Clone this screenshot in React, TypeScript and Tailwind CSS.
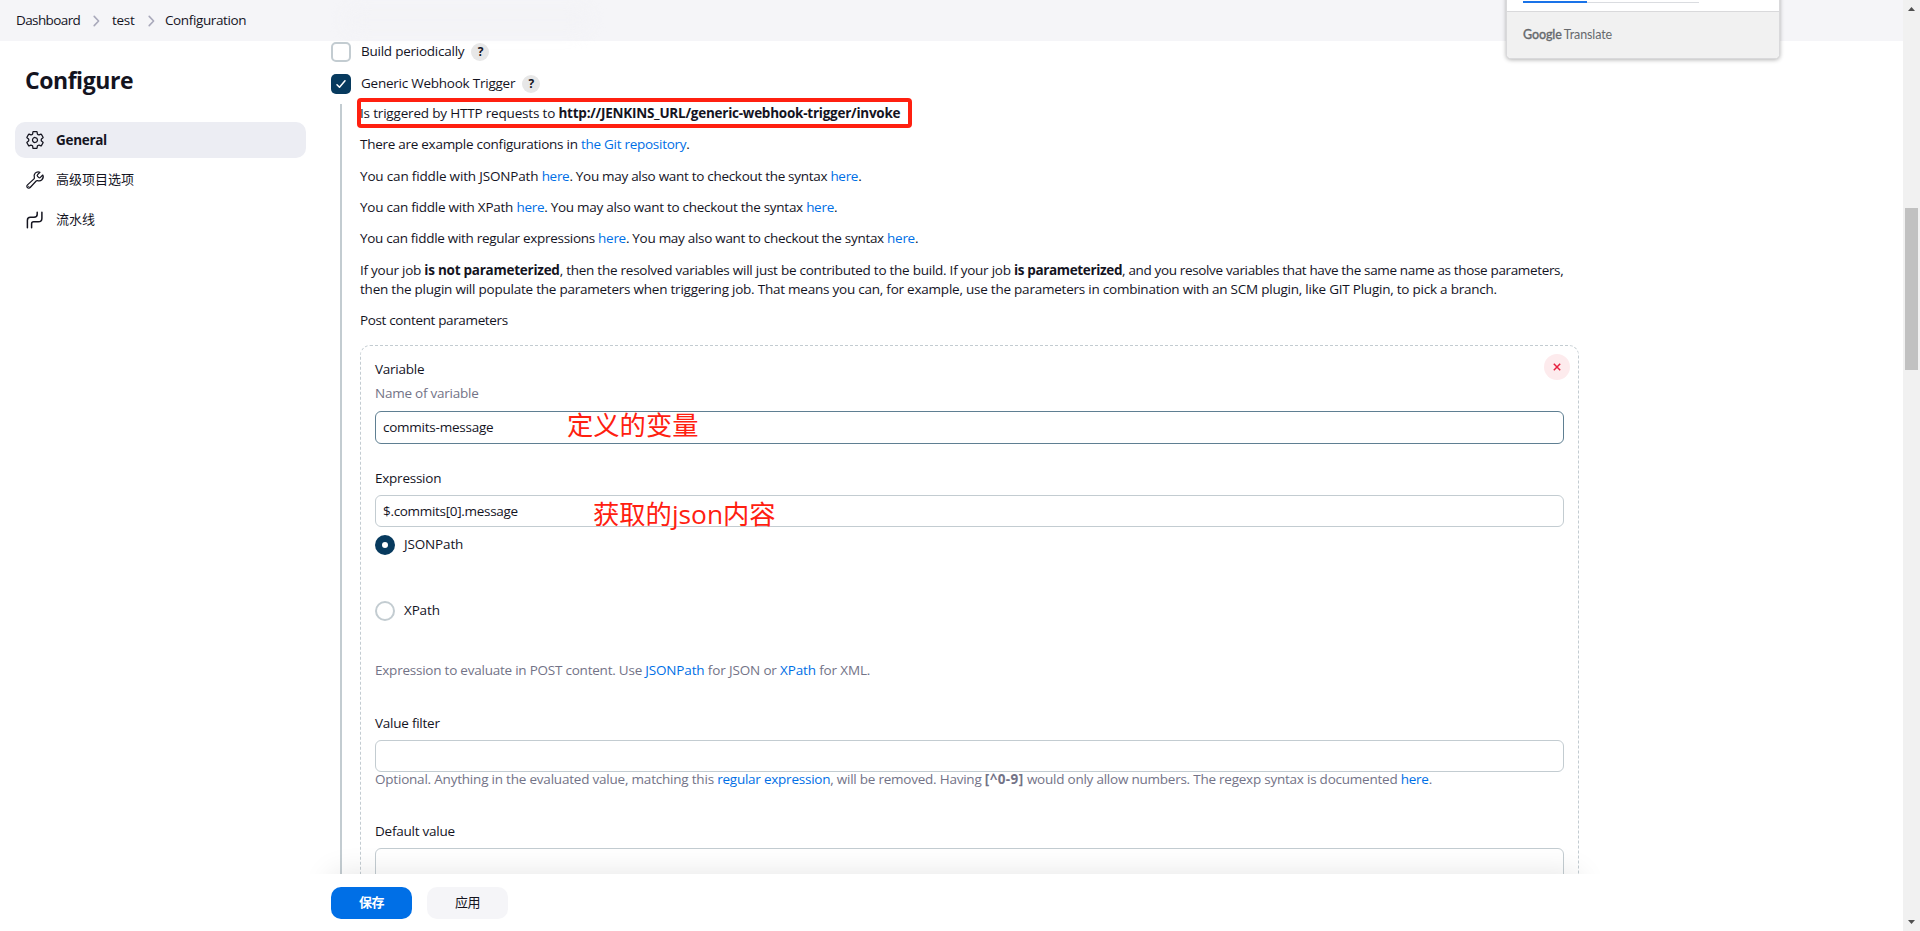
import type { ReactNode } from "react";
import { IoBuildOutline, IoSettingsOutline } from "react-icons/io5";

function Link({ children }: { children: ReactNode }) {
  return <a className="text-[#006fe6]">{children}</a>;
}

function Chevron() {
  return (
    <svg className="h-3 w-[7px]" viewBox="0 0 7 12" fill="none" stroke="#a9a9bb" strokeWidth="1.6">
      <path d="M1.2 1.4 5.6 6 1.2 10.6" strokeLinecap="round" strokeLinejoin="round" />
    </svg>
  );
}

function Help() {
  return (
    <span className="flex size-[18px] items-center justify-center rounded-full bg-[#e7e7e7] text-[12px] leading-none font-bold">
      ?
    </span>
  );
}

function PipelineIcon() {
  return (
    <svg className="size-[18px]" viewBox="0 0 18 18" fill="none" stroke="currentColor" strokeWidth="1.5" strokeLinecap="round">
      <path d="M1.4 16.8V9.2c0-2 1-3 3-3H8c2 0 3.200-1 3.200-3V1.300" />
      <path d="M5.600 16.800v-4c0-1.300.7-2 2-2h4.600c2.400 0 3.700-1.200 3.700-3.600V1.300" />
    </svg>
  );
}

function Radio({ label, checked }: { label: string; checked?: boolean }) {
  return (
    <div className="flex h-5 items-center gap-[9px]">
      {checked ? (
        <span className="flex size-5 items-center justify-center rounded-full bg-[#073a5e]">
          <span className="size-[6px] rounded-full bg-white" />
        </span>
      ) : (
        <span className="size-5 rounded-full border-2 border-[#c3ccd1]" />
      )}
      <span className="tracking-[-0.15px]">{label}</span>
    </div>
  );
}

export default function App() {
  return (
    <div className="flex h-[931px] w-[1920px] overflow-hidden bg-white font-['Open_Sans','Noto_Sans_CJK_SC',sans-serif] text-[13.5px] leading-[19.25px] tracking-[-0.24px] text-[#14141f]">
      <div className="relative flex min-w-0 flex-1 flex-col">
        <header className="relative flex h-[41px] shrink-0 items-center bg-[#f5f5f8] pl-4">
          <span className="w-[77px] tracking-[-0.6px]">Dashboard</span>
          <Chevron />
          <span className="ml-[12px] w-[36px] tracking-[-0.3px]">test</span>
          <Chevron />
          <span className="ml-[10px] tracking-[-0.38px]">Configuration</span>
          <span className="absolute top-2 left-[345px] h-6 w-[245px] rounded-full bg-[#f3f3f6] blur-[8px]" />
        </header>

        <div className="flex min-h-0 flex-1">
          <aside className="w-[306px] shrink-0 pl-[15px]">
            <h1 className="mt-[22px] pl-[10px] text-[23px] leading-[34px] font-bold tracking-[-0.45px]">Configure</h1>
            <nav className="mt-[25px] flex flex-col gap-1">
              <a className="flex h-9 items-center gap-[10px] rounded-[10px] bg-[#ecedf3] pl-[10px] font-bold">
                <IoSettingsOutline className="size-5" />
                <span className="pt-[2px] pl-px tracking-[-0.3px]">General</span>
              </a>
              <a className="flex h-9 items-center gap-[11px] pl-[10px] text-[13px] tracking-normal">
                <IoBuildOutline className="size-5" />
                高级项目选项
              </a>
              <a className="flex h-9 items-center gap-[12px] pl-[11px] text-[13px] tracking-normal">
                <PipelineIcon />
                流水线
              </a>
            </nav>
          </aside>

          <main className="flex min-w-0 flex-1 flex-col">
            <section className="h-[833px] shrink-0 overflow-hidden pt-px pl-[25px]">
              <div className="flex h-5 items-center">
                <span className="size-5 rounded-[5px] border-2 border-[#c3ccd1]" />
                <span className="mr-[7px] ml-[10px]">Build periodically</span>
                <Help />
              </div>
              <div className="mt-3 flex h-5 items-center">
                <span className="flex size-5 items-center justify-center rounded-[5px] bg-[#073a5e]">
                  <svg className="size-[10px]" viewBox="0 0 10 10" fill="none" stroke="#fff" strokeWidth="1.5" strokeLinecap="round" strokeLinejoin="round">
                    <path d="M1 5.800 3.500 8.300 9 1.800" />
                  </svg>
                </span>
                <span className="mr-[7px] ml-[10px]">Generic Webhook Trigger</span>
                <Help />
              </div>

              <div className="mt-[10px] ml-[9px] border-l-2 border-[#c3ccd1] pl-[18px]">
                <div className="flex flex-col gap-3 pr-[325px] whitespace-nowrap">
                  <p className="relative tracking-[-0.18px]">
                    Is triggered by HTTP requests to <b className="tracking-[-0.24px]">http://JENKINS_URL/generic-webhook-trigger/invoke</b>
                    <span className="absolute top-[-6px] left-[-3px] h-[30px] w-[555px] rounded-[4px] border-4 border-[#ff2010]" />
                  </p>
                  <p className="tracking-[-0.27px]">
                    There are example configurations in <Link>the Git repository</Link>.
                  </p>
                  <p className="tracking-[-0.3px]">
                    <span className="tracking-[-0.17px]">You can fiddle with JSONPath </span>
                    <Link>here</Link>. You may also want to checkout the syntax <Link>here</Link>.
                  </p>
                  <p className="tracking-[-0.28px]">
                    <span className="tracking-[-0.24px]">You can fiddle with XPath </span>
                    <Link>here</Link>. You may also want to checkout the syntax <Link>here</Link>.
                  </p>
                  <p className="tracking-[-0.295px]">
                    You can fiddle with regular expressions <Link>here</Link>. You may also want to checkout the syntax <Link>here</Link>.
                  </p>
                  <p className="tracking-[-0.23px]">
                    <span className="relative top-px tracking-[-0.25px]">
                      If your job <b>is not parameterized</b>, then the resolved variables will just be contributed to the build. If your job{" "}
                      <span className="tracking-[-0.35px]">
                        <b>is parameterized</b>, and you resolve variables that have the same name as those parameters,
                      </span>
                    </span>
                    <br />
                    then the plugin will populate the parameters when triggering job. That means you can, for example, use the parameters in combination with an SCM plugin, like GIT Plugin, to pick a branch.
                  </p>
                  <p className="tracking-[-0.36px]">Post content parameters</p>
                </div>

                <div className="relative mt-[15px] h-[600px] w-[1219px] rounded-[10px] border border-dashed border-[#c3ccd1] px-[14px] pt-[14px]">
                  <button className="absolute top-2 right-[8px] flex size-[26px] items-center justify-center rounded-full bg-[#fdebed]">
                    <svg className="size-2" viewBox="0 0 8 8" fill="none" stroke="#e6213f" strokeWidth="1.500">
                      <path d="m.8.8 6.400 6.400M7.200.8.8 7.200" />
                    </svg>
                  </button>
                  <p>Variable</p>
                  <p className="mt-[5px] text-[#737387]">Name of variable</p>
                  <div className="relative mt-[7px] flex h-[33px] items-center rounded-[6px] border border-[#5f7f92] px-[7px] pt-[2px]">
                    commits-message
                    <span className="absolute top-[-6px] left-[191px] text-[26.3px] leading-[38px] tracking-normal text-[#ff2010]">定义的变量</span>
                  </div>

                  <p className="mt-[25px]">Expression</p>
                  <div className="relative mt-[7px] flex h-8 items-center rounded-[6px] border border-[#c3ccd1] px-[7px] pt-[2px] tracking-[-0.31px]">
                    $.commits[0].message
                    <span className="absolute top-[-1px] left-[217px] text-[26.3px] leading-[38px] tracking-normal text-[#ff2010]">获取的json内容</span>
                  </div>
                  <div className="mt-2">
                    <Radio label="JSONPath" checked />
                  </div>
                  <div className="mt-[46px]">
                    <Radio label="XPath" />
                  </div>

                  <p className="mt-[40px] tracking-[-0.15px] text-[#737387]">
                    <span className="tracking-[-0.23px]">Expression to evaluate in POST content. Use </span>
                    <Link>JSONPath</Link> for JSON or <Link>XPath</Link> for XML.
                  </p>
                  <p className="mt-[34px]">Value filter</p>
                  <div className="mt-[7px] h-8 rounded-[6px] border border-[#c3ccd1]" />
                  <p className="mt-[-2px] tracking-[-0.235px] text-[#737387]">
                    <span className="tracking-[-0.21px]">Optional. Anything in the evaluated value, matching this </span>
                    <Link>regular expression</Link>, will be removed. Having <b className="tracking-[0.4px]">[^0-9]</b> would only allow numbers. The regexp syntax is documented <Link>here</Link>.
                  </p>
                  <p className="mt-[32px]">Default value</p>
                  <div className="mt-[7px] h-8 rounded-[6px] border border-[#c3ccd1]" />
                </div>
              </div>
            </section>

            <footer className="relative flex-1 pl-[25px]">
              <div className="absolute top-[-41px] right-0 left-[-30px] h-[41px] overflow-hidden">
                <div className="absolute top-[41px] left-[55px] h-[80px] w-[1248px] shadow-[0_0_30px_rgba(0,0,0,0.11)]" />
              </div>
              <div className="flex gap-[15px] pt-[13px]">
                <button className="h-8 w-[81px] rounded-[10px] bg-[#006fe6] text-[13px] font-bold tracking-[-0.5px] text-white">保存</button>
                <button className="h-8 w-[81px] rounded-[10px] bg-[#f5f5f8] text-[13px] tracking-[-0.5px]">应用</button>
              </div>
            </footer>
          </main>
        </div>

        <div className="absolute top-[-6px] left-[1506px] flex h-[65px] w-[274px] flex-col overflow-hidden rounded-b-[5px] border border-[#d9d9db] bg-white shadow-[0_1px_4px_rgba(0,0,0,0.3)]">
          <div className="flex h-[17px] shrink-0 items-start border-b border-[#d9d9db] px-4 pt-[6px]">
            <div className="h-[2px] w-16 bg-[#1a73e8]" />
            <div className="mt-px h-px w-28 bg-[#dadce0]" />
          </div>
          <div className="flex flex-1 items-center bg-[#f1f1f1] pl-4 font-['Lato',sans-serif] text-[12.500px] tracking-[-0.1px] text-[#66696d]">
            <span className="mr-[2px] font-medium [-webkit-text-stroke:0.3px_currentColor]">Google</span>
            <span>Translate</span>
          </div>
        </div>
      </div>

      <div className="flex w-[17px] shrink-0 flex-col items-center bg-[#f1f1f1]">
        <svg className="mt-[7px] h-1 w-[7px]" viewBox="0 0 7 4" fill="#505050">
          <path d="M0 4 3.500 0 7 4z" />
        </svg>
        <div className="mt-[197px] h-[162px] w-[13px] bg-[#c1c1c1]" />
        <svg className="mt-auto mb-[7px] h-1 w-[7px]" viewBox="0 0 7 4" fill="#505050">
          <path d="M0 0h7L3.500 4z" />
        </svg>
      </div>
    </div>
  );
}
